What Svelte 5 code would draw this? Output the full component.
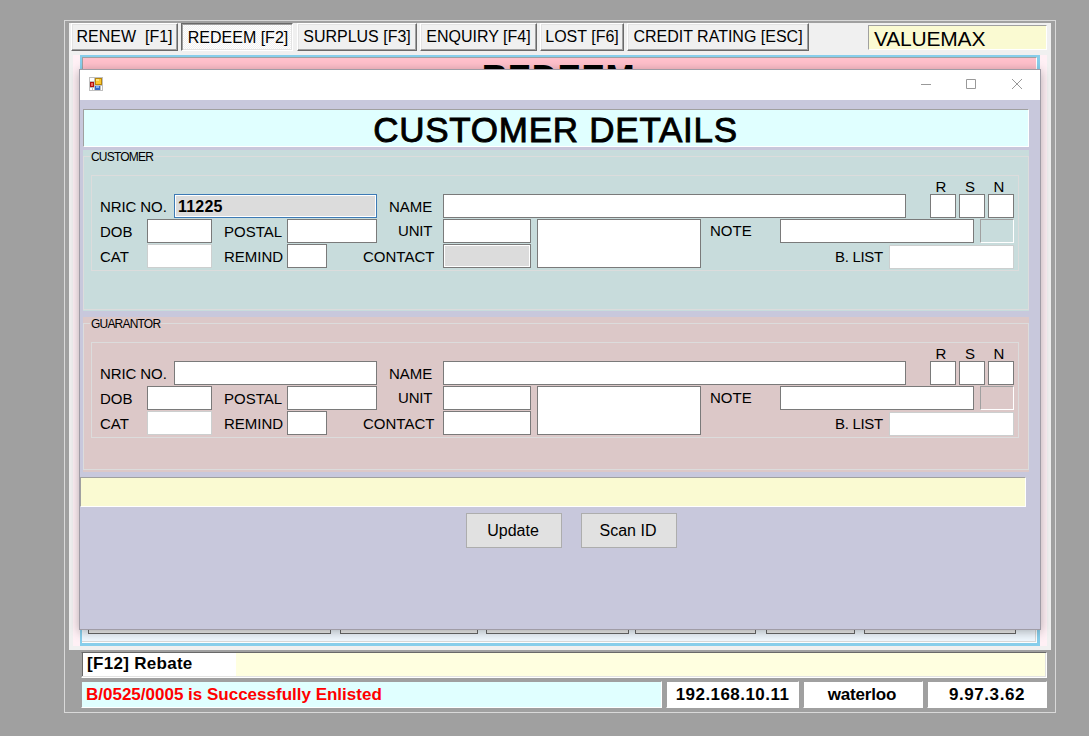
<script>
  const tabs = [
    { label: 'RENEW\u00a0 [F1]', w: 107, gap: 3 },
    { label: 'REDEEM [F2]', w: 112, gap: 4, active: true },
    { label: 'SURPLUS [F3]', w: 120, gap: 3 },
    { label: 'ENQUIRY [F4]', w: 117, gap: 3 },
    { label: 'LOST [F6]', w: 84, gap: 3 },
    { label: 'CREDIT RATING [ESC]', w: 182, gap: 0 }
  ];
  const people = [
    { title: 'CUSTOMER', kind: 'customer', nric: '11225' },
    { title: 'GUARANTOR', kind: 'guarantor', nric: '' }
  ];
  const actions = [
    { w: 243, gap: 9 }, { w: 138, gap: 8 }, { w: 143, gap: 6 },
    { w: 121, gap: 10 }, { w: 89, gap: 9 }, { w: 152, gap: 0 }
  ];
</script>

<div class="screen">
  <div class="frame">
    <main class="client">
      <nav class="tabs">
        {#each tabs as t}
          <button class="tab" class:active={t.active} style="width:{t.w}px;margin-right:{t.gap}px">{t.label}</button>
        {/each}
        <div class="shop">VALUEMAX</div>
      </nav>
      <div class="pink">
        <section class="pane">
          <h1 class="redeem">REDEEM</h1>
          <div class="actions">
            {#each actions as a}
              <i style="width:{a.w}px;margin-right:{a.gap}px"></i>
            {/each}
          </div>
        </section>
      </div>
    </main>
    <footer>
      <div class="rebate"><span>[F12] Rebate</span></div>
      <div class="status">
        <div class="msg">B/0525/0005 is Successfully Enlisted</div>
        <div class="cell ip">192.168.10.11</div>
        <div class="cell host">waterloo</div>
        <div class="cell ver">9.97.3.62</div>
      </div>
    </footer>
  </div>

  <div class="dialog">
    <header class="titlebar">
      <svg class="appicon" width="14" height="14" viewBox="0 0 14 14" shape-rendering="crispEdges">
        <rect width="14" height="14" fill="#bfbfbf" />
        <path fill="#fff" d="M1 1h4v3H1zM1 11h2v2H1zM4 11h1v2H4zM12 9h1v4h-1z" />
        <rect x="6" y="1" width="7" height="7" fill="#b8860b" />
        <rect x="7" y="2" width="5" height="5" fill="#fbc72f" />
        <rect x="7" y="2" width="3" height="2" fill="#ffe27a" />
        <rect x="1" y="5" width="4" height="5" fill="#b01010" />
        <rect x="2" y="6" width="2" height="3" fill="#ee6a5a" />
        <rect x="6" y="9" width="5" height="4" fill="#3468c8" />
        <rect x="7" y="9" width="3" height="2" fill="#7fb0f5" />
      </svg>
      <svg class="ctl" width="102" height="12" viewBox="0 0 102 12" fill="none" stroke="#999">
        <path d="M0 6.5h10" />
        <path d="M45.500 1.500h9v9h-9z" />
        <path d="M91 1l10 10M101 1L91 11" />
      </svg>
    </header>
    <div class="content">
      <h2 class="heading">CUSTOMER DETAILS</h2>
      {#each people as p}
        <section class="group {p.kind}">
          <div class="outline">
            <span class="legend">{p.title}</span>
            <div class="inner">
              <div class="flags"><span>R</span><span>S</span><span>N</span></div>
              <div class="row">
                <label class="l74">NRIC NO.</label>
                <div class="box w203" class:focus={p.nric}>{p.nric}</div>
                <label class="name">NAME</label>
                <div class="box w463"></div>
                <div class="trio"><div class="box"></div><div class="box"></div><div class="box"></div></div>
              </div>
              <div class="lower">
                <div class="left">
                  <div class="row">
                    <label class="l47 d">DOB</label><div class="box w65"></div>
                    <label class="mid d">POSTAL</label><div class="box w90"></div>
                    <label class="unit">UNIT</label><div class="box w88"></div>
                  </div>
                  <div class="row">
                    <label class="l47 d">CAT</label><div class="box w65 pale"></div>
                    <label class="mid d">REMIND</label><div class="box w40"></div>
                    <label class="contact d">CONTACT</label><div class="box w88" class:grey={p.nric}></div>
                  </div>
                </div>
                <div class="box memo"></div>
                <div class="right">
                  <div class="row">
                    <label class="note">NOTE</label><div class="box w194"></div><div class="sunk"></div>
                  </div>
                  <div class="row">
                    <label class="blist d">B. LIST</label><div class="box w125 pale"></div>
                  </div>
                </div>
              </div>
            </div>
          </div>
        </section>
      {/each}
      <div class="info"></div>
      <div class="buttons"><button>Update</button><button>Scan ID</button></div>
    </div>
  </div>
</div>

<style>
  :global(body) { margin: 0; background: #a0a0a0; overflow: hidden; }
  .screen, .screen * { box-sizing: border-box; }
  .screen {
    position: relative; width: 1089px; height: 736px; padding: 20px 0 0 64px;
    background: #a0a0a0; color: #000; overflow: hidden;
    font-family: "Liberation Sans", Arial, sans-serif; font-size: 15px;
  }
  button { font-family: inherit; color: #000; padding: 0; border-radius: 0; white-space: nowrap; }
  .frame { width: 992px; height: 693px; border: 1px solid #d9d9d9; padding: 2px 0 0 4px; }
  .client { width: 982px; height: 627px; background: #f0f0f0; padding-left: 2px; }
  .tabs { display: flex; height: 32px; }
  .tab {
    height: 28px; font-size: 16px; line-height: 22px; background: #f0f0f0;
    border: 1px solid; border-color: #fff #696969 #696969 #fff;
    box-shadow: inset -1px -1px #a0a0a0, inset 1px 1px #e3e3e3;
  }
  .tab.active {
    background: repeating-conic-gradient(#f0f0f0 0 25%, #fff 0 50%) 0 0 / 2px 2px;
    border-color: #696969 #fff #fff #696969; padding: 2px 0 0 2px;
    box-shadow: inset 1px 1px #a0a0a0, inset -1px -1px #e3e3e3;
  }
  .shop {
    width: 179px; height: 25px; margin: 2px 0 0 59px; padding-left: 5px; background: #fafad2;
    border: 1px solid; border-color: #a0a0a0 #fff #fff #a0a0a0;
    font-size: 21px; line-height: 25px; letter-spacing: -.2px;
  }
  .pink { width: 974px; height: 591px; margin-left: 2px; padding: 0 7px; background: #fff0f5; }
  .pane {
    width: 960px; height: 591px; border: 2px solid #87ceeb; background: #f0f8ff;
    border-right-width: 3px; border-bottom-width: 3px;
    display: flex; flex-direction: column; justify-content: space-between;
    box-shadow: inset -1px -1px #fff, inset -2px -2px #d9d9d9;
  }
  .redeem {
    height: 40px; margin: 0; border: 1px solid; border-color: #a0a0a0 #fff #fff #a0a0a0;
    background: #ffc0cb; text-align: center; font-size: 35px; line-height: 38px; padding-right: 2px; letter-spacing: .6px;
  }
  .actions { display: flex; padding: 0 0 9px 6px; }
  .actions i { height: 25px; flex: none; background: #f0f0f0; border: 1px solid #696969; }

  footer { width: 966px; margin: 2px 0 0 12px; font-size: 17px; font-weight: bold; }
  .rebate {
    height: 26px; background: #ffffe0; border: 1px solid; border-color: #696969 #fff #fff #a0a0a0;
    box-shadow: inset -1px -1px #e3e3e3; padding: 0 0 1px 0;
  }
  .rebate span { display: block; width: 154px; height: 23px; padding-left: 4px; background: #fff; line-height: 22px; letter-spacing: .3px; border-left: 1px solid #696969; }
  .status { display: flex; gap: 4px; margin-top: 3px; }
  .status > div { height: 27px; line-height: 25px; border: 1px solid; border-color: #a0a0a0 #fff #fff #a0a0a0; white-space: nowrap; }
  .msg { width: 581px; padding-left: 4px; color: #f00; background: #e0ffff; }
  .cell { background: #fff; text-align: center; }
  .ip { width: 133px; letter-spacing: .45px; }
  .host { width: 120px; letter-spacing: -.2px; padding-right: 2px; }
  .ver { width: 120px; letter-spacing: .55px; }

  .dialog {
    position: absolute; left: 79px; top: 69px; width: 962px; height: 561px;
    border: 1px solid #a09ca6; background: #c8c8dc; box-shadow: 0 2px 10px rgba(0, 0, 0, .3);
  }
  .titlebar { height: 30px; background: #fff; display: flex; justify-content: space-between; align-items: center; padding: 0 17px 2px 9px; }
  .content { padding-top: 9px; }
  .heading {
    width: 946px; height: 38px; margin: 0 0 3px 3px; background: #e0ffff; padding-right: 1px;
    border: 1px solid; border-color: #a0a0a0 #fff #fff #a0a0a0; text-align: center;
    font-size: 35px; font-weight: normal; line-height: 39px; letter-spacing: .75px; -webkit-text-stroke: .9px #000;
  }
  .group { width: 946px; margin-left: 3px; padding-top: 6px; }
  .customer { height: 161px; margin-bottom: 6px; background: #c8dcdc; }
  .guarantor { height: 155px; margin-bottom: 5px; background: #dcc8c8; }
  .outline { position: relative; height: 154px; border: 1px solid #dcdcdc; padding: 18px 0 0 7px; }
  .guarantor .outline { height: 147px; }
  .legend { position: absolute; left: 6px; top: -7px; padding: 0 1px; font-size: 12px; line-height: 14px; letter-spacing: -.8px; background: #c8dcdc; }
  .guarantor .legend { background: #dcc8c8; }
  .inner { width: 928px; height: 96px; border: 1px solid #dcdcdc; padding-left: 8px; }
  .flags { display: flex; height: 18px; padding: 2px 0 0 829px; line-height: 17px; }
  .flags span { width: 29px; padding-right: 5px; text-align: center; white-space: nowrap; }
  .row { display: flex; height: 24px; margin-bottom: 1px; }
  label { flex: none; line-height: 25px; white-space: nowrap; }
  label.d { line-height: 26px; }
  .box { flex: none; height: 24px; background: #fff; border: 1px solid #7a7a7a; }
  .pale { border-color: #cccfcf; }
  .grey { background: #dcdcdc; box-shadow: inset 0 0 0 1px #fff; }
  .focus { background: #dcdcdc; border-color: #3d7ab5; box-shadow: inset 0 0 0 1px #fff; padding-left: 3px; font-weight: bold; font-size: 16px; line-height: 24px; letter-spacing: .2px; }
  .lower { display: flex; }
  .l74 { width: 74px; letter-spacing: -.1px; }
  .l47 { width: 47px; }
  .name { width: 66px; padding-left: 12px; }
  .mid { width: 75px; padding-left: 12px; }
  .unit { width: 66px; padding-left: 21px; line-height: 23px; letter-spacing: -.2px; }
  .contact { width: 116px; padding-left: 36px; }
  .note { width: 70px; line-height: 23px; }
  .blist { width: 179px; padding-left: 125px; letter-spacing: -.3px; }
  .w203 { width: 203px; } .w463 { width: 463px; } .w65 { width: 65px; }
  .w90 { width: 90px; } .w88 { width: 88px; } .w40 { width: 40px; }
  .w194 { width: 194px; } .w125 { width: 125px; margin-top: 1px; }
  .trio { display: flex; gap: 3px; margin-left: 24px; }
  .trio .box { width: 26px; }
  .memo { width: 164px; height: 49px; margin: 0 9px 0 6px; }
  .sunk { width: 34px; height: 24px; margin-left: 6px; border: 1px solid; border-color: #a0a0a0 #fff #fff #a0a0a0; }
  .info { width: 946px; height: 30px; background: #fafad2; border: 1px solid; border-color: #a0a0a0 #fff #fff #a0a0a0; }
  .buttons { display: flex; gap: 19px; margin: 6px 0 0 386px; }
  .buttons button { width: 96px; height: 35px; font-size: 16px; background: #e1e1e1; border: 1px solid #adadad; padding-right: 2px; }
</style>
